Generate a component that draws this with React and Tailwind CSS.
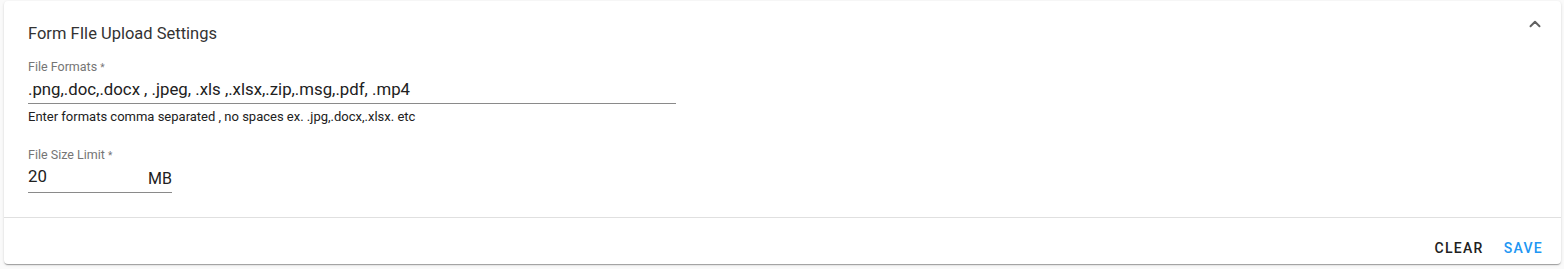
import { ChevronUp } from 'lucide-react';

const FONT = { fontFamily: 'Roboto, "Liberation Sans", sans-serif' };

export default function App() {
  return (
    <div className="bg-[#fafafa] w-[1564px] h-[269px] pt-px" style={FONT}>
      <div className="ml-[4px] w-[1557px] bg-white rounded-[4px] shadow-[0_2px_1px_-1px_rgba(0,0,0,0.2),0_1px_1px_0_rgba(0,0,0,0.14),0_1px_3px_0_rgba(0,0,0,0.12)]">
        {/* ── Header + fields ── */}
        <div className="relative px-[24px] pt-[24px] pb-[24px]">
          <h2 className="text-[16.5px] leading-[18px] text-[#333]">Form FIle Upload Settings</h2>
          <ChevronUp className="absolute right-[17px] top-[14px] w-[18px] h-[18px] text-[#616161]" strokeWidth={2.6} />

          {/* File formats */}
          <div className="mt-[17px] w-[648px]">
            <div className="text-[12.5px] leading-[14px] text-[#757575]">
              File Formats <span className="text-[10px]">*</span>
            </div>
            <div className="flex items-end border-b border-[#8a8a8a] h-[29px] pb-[4px]">
              <span className="text-[16.8px] leading-[19px] text-[#212121]">
                .png,.doc,.docx , .jpeg, .xls ,.xlsx,.zip,.msg,.pdf, .mp4
              </span>
            </div>
            <div className="mt-[5px] text-[13px] leading-[15px] text-[#212121]">
              Enter formats comma separated , no spaces ex. .jpg,.docx,.xlsx. etc
            </div>
          </div>

          {/* File size */}
          <div className="mt-[24px] w-[144px]">
            <div className="text-[12.5px] leading-[14px] text-[#757575]">
              File Size Limit <span className="text-[10px]">*</span>
            </div>
            <div className="flex items-end border-b border-[#8a8a8a] h-[30px]">
              <span className="flex-1 mb-[6px] text-[16.8px] leading-[19px] text-[#212121]">20</span>
              <span className="mb-[4px] text-[16px] leading-[19px] text-[#212121]">MB</span>
            </div>
          </div>
        </div>
        <div className="border-t border-[#e0e0e0]" />
        {/* ── Actions ── */}
        <div className="flex justify-end items-start gap-[6px] h-[46px] pt-[16px] pr-[11px]">
          <button className="px-[7px] py-[6px] leading-[16px] text-[14px] font-medium tracking-[1.3px] text-[#212121]">CLEAR</button>
          <button className="px-[7px] py-[6px] leading-[16px] text-[14px] font-medium tracking-[1.3px] text-[#2196f3]">SAVE</button>
        </div>
      </div>
    </div>
  );
}
